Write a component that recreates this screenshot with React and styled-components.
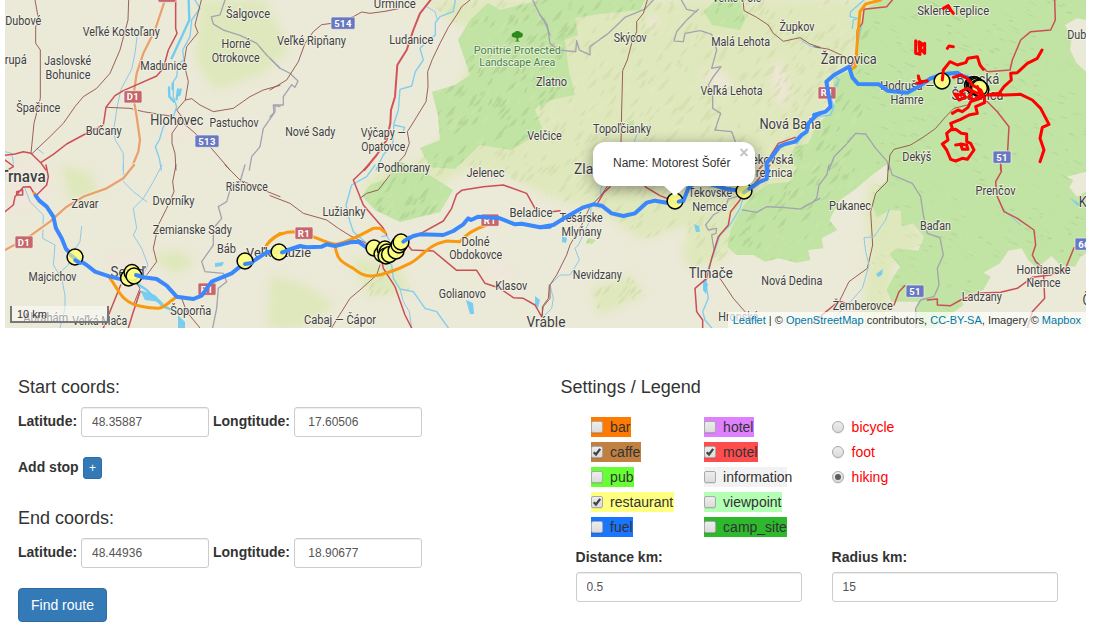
import React from 'react';
import styled, { createGlobalStyle, css } from 'styled-components';

const Global = createGlobalStyle`
  *, *::before, *::after { box-sizing: border-box; }
  body {
    margin: 0;
    background: #fff;
    color: #333;
    font: 14px/20px "Liberation Sans", Arial, sans-serif;
  }
`;

/* ---------- map data ---------- */

const MAP = { x: 5, y: 0, w: 1081, h: 328 };

// Vector tiles: each keeps its lines in thirds of a pixel from its own origin.
const ORIGIN = {
  A: [0, 0], B: [270, 0], C: [540, 0], D: [814, 0],
  E: [0, 165], F: [270, 165], G: [540, 165], H: [814, 165],
};

const STYLES = {
  river: { stroke: '#7fcdf0', width: 4 },
  stream: { stroke: '#8fc8ea', width: 3 },
  big: { stroke: '#6fcdf2', width: 7 },
  border: { stroke: '#a3a3b0', width: 4, dash: '22 3' },
  minor: { stroke: '#8d4a45', width: 2.6 },
  casing: { stroke: '#f3ead9', width: 13 },
  motorway: { stroke: '#e5a36f', width: 7 },
  major: { stroke: '#cb4f55', width: 4.5 },
  trunk: { stroke: '#d2535a', width: 6 },
  orange: { stroke: '#f8990f', width: 9 },
};

const LINES = [
  // north west
  ['A', 'stream', 'M411 112L405 160L395 208L363 268L352 318L341 390L346 420L370 460L370 510M15 455L35 460L41 490M110 445L130 460'],
  ['A', 'big', 'M566 0L568 60L545 110L515 175'],
  ['A', 'river', 'M585 0L600 25L575 60L570 110L548 150L552 180L535 190L530 230L520 245L520 290L530 320L520 350L490 380L478 420L466 440L478 475L484 510'],
  ['A', 'big', 'M507 262L508 290L522 305M518 250L518 268M534 268L530 298M542 268L538 285'],
  ['A', 'border', 'M675 0L660 45L634 50L640 72L670 90L720 106L770 130L800 165L840 205M840 320L820 315L822 340L790 385L780 440L755 470L748 510'],
  ['A', 'minor', 'M105 0L116 60L107 80V130L121 150V295L102 370L93 460M386 0L384 60L360 150L330 220L290 265L250 290L225 320L190 370L150 410L95 462M604 0L585 75L594 98L560 140L552 190L565 245L556 300L575 296L600 315L640 335L700 325L750 290L790 270L840 256M556 300L530 330L545 350L530 380L516 400V430L525 460L528 510M545 365L580 395L630 440L690 510M320 322L390 325L430 335L510 348'],
  ['A', 'casing', 'M495 0L465 90L430 160L410 220L400 290L410 350L420 420L415 455L392 510'],
  ['A', 'motorway', 'M495 0L465 90L430 160L410 220L400 290L410 350L420 420L415 455L392 510'],
  ['A', 'major', 'M527 0V85L531 100L505 150L490 205L470 228L420 250L370 272L345 287L318 322L310 375L250 405L200 432L160 463L122 488L93 460L70 455L45 462L15 466M122 488L138 510M15 480L40 498'],
  // Ludanice valley
  ['B', 'river', 'M556 0L550 35L510 50L496 68V105L470 125L450 145L460 180L436 215L425 258L390 268L385 330L372 370L368 430L340 465L318 510M372 375L404 382L400 393'],
  ['B', 'stream', 'M470 20L495 35L502 60'],
  ['B', 'border', 'M0 175L30 205L60 220L84 243L75 262L65 254L40 290V315L15 315V335L0 350M788 0L810 45L822 60L840 105'],
  ['B', 'minor', 'M600 0L575 20L560 45L535 82L510 130L487 178L473 215L474 260L468 305L425 375L412 395L418 430L405 465L385 487M0 270L50 240L85 185L105 130L130 95L155 74L185 70L250 50L275 36L300 40L345 34L385 26'],
  ['B', 'trunk', 'M482 0L450 40L430 90L410 150L382 195L375 290L363 330L361 370L350 420L320 465L283 510'],
  ['C', 'border', 'M340 0L315 27L255 52L205 100L150 140V165L118 150L110 122L107 155L55 150L30 130L22 75L0 45M424 0L440 28L470 35M475 28L440 60L410 95L402 123L430 125L435 100L480 92L515 103L530 150L515 205L543 200L520 230L505 255L518 285V325L542 340L525 390L575 395L587 428'],
  ['C', 'minor', 'M322 0L310 40L290 65V95L275 130L262 180L248 212L245 330L243 430M609 0L612 32L650 52L685 75L700 100L730 124L780 113L810 132L840 142'],
  ['C', 'stream', 'M330 375L290 405L282 428M785 122L810 138L840 145'],
  ['C', 'major', 'M765 412L715 430L690 470L655 510'],
  ['C', 'big', 'M790 400L770 430'],
  // eastern hills
  ['D', 'border', 'M45 510L60 470L100 430L125 400L155 402L185 445L220 485L226 510'],
  ['D', 'minor', 'M223 510L228 465L240 448L290 435L330 410L365 385L395 350L420 325L460 315M0 140L45 148L105 176'],
  ['D', 'river', 'M150 0L110 35L108 50L130 55L118 60L115 85M135 60L140 85L130 140L128 180M60 225L75 240L50 290L60 320L50 345L10 350'],
  ['D', 'major', 'M235 0L218 20L150 28L145 70L130 90L128 180L108 200M722 0L724 60L710 90L650 95L620 120L595 180L588 210L520 215L510 205M515 300L550 335L585 380L580 470L560 490V510'],
  ['D', 'orange', 'M200 0L155 12L138 35L132 100L124 200L110 208'],
  // Trnava and the south west
  ['E', 'stream', 'M370 0V50L400 80L440 110M486 0L460 50L430 100L400 130L410 190L400 210L425 250L444 300L430 330M75 70L90 110L130 150L128 220L165 240L160 300L185 340L195 390V430L180 489M245 185L240 230L220 260L205 300L165 335'],
  ['E', 'big', 'M410 355L440 375L460 395L490 425L530 440'],
  ['E', 'border', 'M735 0L720 50L690 75L680 110L655 125L665 160L640 190V240L605 290L615 320L670 325L680 350L655 370L650 430L638 489'],
  ['E', 'minor', 'M528 0L518 50L522 80L500 130L475 180L460 250L470 290L440 330M675 0L720 45L790 75L840 95M410 355L420 370L400 420M545 400L560 440L600 489'],
  ['E', 'casing', 'M402 0L370 40L320 70L250 95L200 125L150 170L80 220L15 255'],
  ['E', 'motorway', 'M402 0L370 40L320 70L250 95L200 125L150 170L80 220L15 255'],
  ['E', 'major', 'M15 140L40 120L45 95L70 66L90 65L105 90M138 0L145 35L140 60L110 90M50 80L68 75V90H50ZM15 20L40 5M362 360L310 489M420 380L400 440L385 489'],
  ['E', 'orange', 'M103 85L120 110M330 340C350 365 355 385 375 402C400 425 450 430 475 430C495 428 510 408 530 395M795 250C800 232 820 220 840 205'],
  // Nitra
  ['F', 'river', 'M315 0L290 35L245 60L228 120L240 170L250 200L285 230M335 215L350 212L358 225M350 280L365 300L370 340L390 372L430 380L465 430L500 440L535 489'],
  ['F', 'stream', 'M390 372L400 410L418 440L425 489'],
  ['F', 'minor', 'M0 92L60 115L100 145L170 165L205 190L240 212L300 240M360 30L325 75L290 85L270 100M330 300L320 330L270 375L240 400L215 440L205 455L185 489M838 360L835 400L817 425V455'],
  ['F', 'major', 'M297 0L250 45L280 120L310 155L340 190L350 210M410 235L425 255L490 258L560 316H620L645 355L690 370L730 398L760 400L795 420L815 455M435 215L520 168L545 130L560 88L575 76L640 65L700 60L770 85L795 130M335 285L340 310L375 365L405 450L425 489'],
  ['F', 'orange', 'M0 228C15 212 35 200 75 200C115 203 150 228 195 238C230 235 280 205 310 190L330 190L345 202M195 240C200 280 210 290 250 310C275 330 290 335 310 333C350 328 400 305 420 295C460 275 470 240 530 228L570 230C590 205 620 190 650 180'],
  // Hron valley
  ['G', 'river', 'M615 80L600 130L570 180L540 210L520 270L505 310'],
  ['G', 'big', 'M497 345L495 375'],
  ['G', 'river', 'M500 370L505 400L488 440L495 465L515 489'],
  ['G', 'stream', 'M185 60L180 95L155 120L148 170L115 240L105 250L118 285L90 330L60 330L30 360L40 400L35 430L15 450'],
  ['G', 'border', 'M590 95L565 102L555 130L520 150L497 180L505 195L530 190L528 205L515 210L522 255M608 135L650 142L680 125L725 127L780 132L840 100'],
  ['G', 'minor', 'M205 60L180 95L150 125L125 180L90 240L80 270L50 330L30 360V400L10 425L5 455M540 340L580 400L615 440'],
  ['G', 'major', 'M210 65L190 85L170 120M315 65L360 92L400 108M645 55L690 0M612 80L600 105L572 140L565 180L535 215L515 280L500 340L465 370L470 440L488 465V489M35 140L60 137'],
  ['H', 'border', 'M45 0L38 30L15 60L8 100L0 108M225 0L235 30L295 55L320 95L328 150L340 205L378 218L388 270L370 310L375 360L360 395L320 405L305 430V489'],
  ['H', 'minor', 'M223 0L220 50L185 85L170 140L176 240L160 310L105 350L78 405'],
  ['H', 'stream', 'M225 135L215 165L180 215L150 218L155 260L165 300L145 370L110 410L50 470M560 120L580 145L620 180M655 270L670 300'],
  ['H', 'major', 'M560 0L562 20L545 50L548 90L570 140L610 160L660 195L665 240L655 270L665 290L688 310L692 400L655 440L640 489M780 248L755 310L710 330L655 337L610 370L560 382L490 385L440 405L410 422L370 420V402L340 405M272 362L255 380L240 420M0 470L75 408L95 415'],
];

const FOREST_EAST =
  'M545 0L490 30L480 100L470 190L440 215L400 235L405 310L385 340L345 385L325 430L285 440L262 480L290 500L270 545L205 552L165 580L135 610L110 650L92 690L82 740L110 765L160 765L195 785L235 775L290 788L330 780L325 750L370 745L365 715L412 690L388 660L420 600L470 565L510 530L550 500L565 490L560 540L530 570L515 610L530 652L572 630L602 632L605 680L640 670L672 712L655 752L590 745L568 762L600 800L580 830L560 870L575 905L655 905L645 940V984H700L750 945L790 915L783 890L850 870L872 830L850 818L900 790L925 752L965 745L985 780L1010 805L1055 768L1080 795L1125 800L1142 770L1158 760V575L1130 590L1108 562L1120 540L1100 530L1158 515V215L1130 190L1110 150L1115 110L1095 75L1130 55L1158 60V0Z';

const LAND = {
  meadow:
    'M425 0H880L850 60L830 90L815 170L770 200L720 262L690 268L682 255L690 225L640 240L600 210L560 200L530 188L500 172L468 168L440 185L400 200L360 190L375 175L420 160L450 130L455 95L470 60L475 30L450 20Z' +
    'M200 0H265L290 50L260 75L215 90L195 60ZM60 165L90 172L100 195L70 200ZM270 275L305 285L335 305L300 328H268ZM350 258L395 262L410 290L370 298ZM150 255L180 250L195 262L175 275ZM590 290L630 275L645 295L600 315ZM870 176L930 240L895 260L885 328H860L870 250L865 210Z',
  forest:
    'M488 3L500 10L540 0H645L640 10L600 14L575 18L578 35L565 40L570 80L548 60L540 72L546 95L535 110L543 130L512 150L480 145L455 169L430 167L420 148L440 140L438 115L432 92L455 85L470 75L458 40L470 20Z' +
    'M370 185L390 178L395 160L420 169L453 190L440 212L400 222L375 210L362 196Z' +
    'M704 12L715 0H740L745 20L740 30L712 25Z' +
    'M540 50L570 75L575 95L550 100L540 110ZM628 122L634 120V126L628 128ZM588 238L596 240L592 244L586 243Z',
  pale:
    'M702 75L712 68L725 72L735 88L722 94L712 86ZM770 66L782 60L790 92L784 108L774 98ZM480 270L497 258L515 275L500 282ZM110 255L150 250L155 290L120 298ZM10 165L42 160L50 195L20 215L5 205ZM155 118L185 112L195 135L165 138ZM370 230L410 235L400 265L375 262ZM645 20L655 14L662 22L648 32Z',
};

const LAKES =
  'M140 290L155 295L165 305L175 312L185 322V328H178V315L160 302L145 300ZM215 263L224 262L222 266L215 267ZM466 300L473 303L474 314L470 314ZM535 296L540 300L538 308L535 305ZM562 236L567 238L566 243L562 242ZM694 224L699 226L700 232L696 232ZM703 280L708 284L706 294L703 290ZM876 274L883 269L882 275L878 277ZM1069 197L1080 204L1078 206Z';

// label: text, centre x, baseline y, width, size, weight
const LABELS = [
  ['Dubové', 23.3, 25, 36], ['Veľké Kostoľany', 121.3, 36, 77], ['Šalgovce', 248, 17.7, 44],
  ['Horné', 236, 48, 29], ['Otrokovce', 235.7, 62, 48], ['Jaslovské', 67.7, 65, 47],
  ['Bohunice', 68, 78.7, 45], ['rupá', 15.8, 64, 22], ['Madunice', 163.8, 69.7, 47],
  ['Špačince', 38.3, 111.7, 44], ['Bučany', 103.7, 134.7, 36], ['Hlohovec', 176.8, 125.3, 53, 14],
  ['Pastuchov', 234, 127.3, 49], ['Urmince', 394.8, 8, 42], ['Veľké Ripňany', 311.5, 45.3, 69],
  ['Ludanice', 411.3, 43.7, 44], ['Nové Sady', 310.2, 136.3, 50], ['Výčapy —', 383.3, 137, 45],
  ['Opatovce', 383.3, 150.7, 44], ['Podhorany', 403.7, 171.7, 52.7], ['Zlatno', 551.5, 85.5, 31],
  ['Velčice', 544.5, 140, 34.5], ['Skýcov', 630.2, 42, 33], ['Veľké Pole', 736.7, 1.8, 49],
  ['Župkov', 797, 31.3, 35], ['Malá Lehota', 740.7, 46, 59], ['Veľká Lehota', 731.5, 94.7, 62],
  ['Nová Baňa', 790.4, 129, 62, 14], ['Topoľčianky', 622, 132.7, 58], ['Zlaté', 589.5, 174, 31, 14],
  ['Tekovská', 769.5, 164, 48], ['Breznica', 770.5, 177.3, 44], ['Sklené Teplice', 953.2, 15.3, 72],
  ['Dub', 1076.8, 39.3, 19], ['Žarnovica', 848.8, 64, 56, 14], ['Hodruša —', 907.2, 90, 54],
  ['Hámre', 907, 103.7, 33], ['Banská', 977.8, 83.7, 43, 14], ['Štiavnica', 977.5, 100, 52, 14],
  ['Dekýš', 916.8, 160.7, 29], ['Trnava', 22.4, 182, 46.5, 16, 500], ['Zavar', 85, 208, 27],
  ['Dvorníky', 173.5, 204.5, 42], ['Rišňovce', 246.8, 190.5, 42], ['Zemianske Sady', 192.3, 233.7, 79],
  ['Báb', 226.5, 252.7, 19], ['Veľké Lužie', 278.5, 256.7, 65], ['Majcichov', 52.5, 281, 48],
  ['Sereď', 128, 276.7, 35, 14], ['Šoporňa', 190.8, 314.7, 41], ['Veľká Mača', 99.8, 325, 55],
  ['Abrahám', 45.8, 321.5, 45], ['Lužianky', 344, 216, 43], ['Jelenec', 485.5, 177, 38],
  ['Beladice', 531, 216.5, 43], ['Dolné', 475.5, 245.7, 28], ['Obdokovce', 475.7, 259.3, 53],
  ['Klasov', 511.2, 290, 32], ['Golianovo', 462.3, 297.7, 47], ['Cabaj — Čápor', 340, 323.7, 72],
  ['Vráble', 546, 326.5, 39, 14], ['Tesárske', 581.3, 222.3, 43], ['Mlyňany', 581.5, 236.3, 40],
  ['Nevidzany', 597.3, 278.7, 49], ['Tlmače', 710.7, 278, 44, 14], ['Tekovské', 710.2, 196.7, 44],
  ['Nemce', 709.7, 210.7, 35], ['Nová Dedina', 791.8, 285, 61], ['Hronské', 738.3, 321, 40],
  ['Pukanec', 850, 210.3, 42], ['Prenčov', 995.5, 195.3, 40], ['Baďan', 935.5, 230, 31],
  ['Žemberovce', 862.8, 310, 60], ['Hontianske', 1043.5, 273.7, 54], ['Nemce', 1043.5, 287.3, 34],
  ['Ladzany', 981.8, 300.5, 40], ['K', 1082.7, 207, 8, 14], ['Č', 1086.5, 305, 8, 14],
];

const SHIELDS = [
  ['D1', 124, 90.7, 18, 'red'], ['D1', 15, 236, 18, 'red'], ['D1', 158, -10, 18, 'red'],
  ['R1', 818, 86.7, 18, 'red'], ['R1', 198, 283, 18, 'red'], ['R1', 295, 227, 18, 'red'],
  ['R1', 481, 214, 18, 'red'], ['513', 195, 135, 24, 'blue'], ['514', 331, 17, 24, 'blue'],
  ['51', 993, 151, 18, 'blue'], ['51', 906, 285, 18, 'blue'], ['66', 1075, 238, 18, 'blue'],
];

const ROUTE = [
  ['E', 'M107 92L118 107L140 125L160 155L168 190L185 220L198 252L224 278L260 300L285 320L330 335L365 343L405 330L430 337L470 342L500 362L530 395L580 402L605 392L635 350L695 325L720 305L750 295L800 262L822 258'],
  ['F', 'M20 262L45 258L90 243L110 247L155 245L170 238L195 243L240 232L265 230L290 248L325 260L370 262L395 232L430 213L450 208L520 210L550 198L565 188L580 178L595 160L603 165L625 155L690 160L735 178L755 176L810 187L840 185'],
  ['G', 'M0 187L40 180L80 155L130 127L160 118L185 122L215 145L250 153L285 145L320 113L345 107L380 113L405 115L430 108L445 70L475 45L520 60L560 72L590 76L615 80L645 60L660 50L680 42L683 15L680 0'],
  ['C', 'M680 510V490L700 465L718 440L730 434L765 425L785 405L800 395L805 370L830 345L840 340'],
  ['D', 'M0 345L35 335L50 320L45 290L37 245L60 225L105 200L115 232L132 252L195 253L220 272L280 278L310 262L350 235L390 222L430 218L445 228L470 235'],
];

const TRAILS =
  'M388 25L403 17L410 30L418 40M305 122V160L318 163L315 125L325 132L318 145L332 160M332 130V160M400 145L405 138L418 140M313 228L318 245L340 243M308 250L322 248L314 236' +
  'M385 240L388 210L408 185L430 195L455 188L462 175L490 170L498 195L508 208M418 232L440 225L460 235L475 255L500 270L510 290M490 280L460 265L440 275L455 292L435 300L422 282L440 285' +
  'M684 150L670 175L640 190L610 218L590 220L592 240L570 260L555 280L520 285M520 285H570L620 283L655 300L680 325L705 373L685 382L678 415L690 450L678 485' +
  'M510 290L512 308L485 320L490 340L465 345L440 358L410 370L415 385L398 400L402 420L385 432L398 450L410 478L425 483L445 475L460 478L480 450L470 430L458 425V402L442 400L425 388L410 390M425 435L440 433L445 448L462 448L458 435L440 432' +
  'M500 295L470 305L462 322L445 335L432 330L415 340M490 260L500 285L480 300L465 290L475 275';

const MARKERS = [
  [75, 257], [128.5, 278], [132, 272.5], [134, 276], [245, 261], [279, 252],
  [374, 248], [382, 254], [385, 249], [387, 252], [386, 256], [389.5, 254.5], [396, 251], [399, 245], [401, 242],
  [675, 201], [744, 191], [942, 81],
  [972.5, 85], [974, 84.3], [975.3, 85], [975, 87], [976.5, 86], [978, 87.5], [981, 89.5], [979.5, 88],
];

const INNER_ROUTE = [
  ['E', 'M212 270L226 282', 0.35], ['E', 'M226 286L240 294', 1], ['E', 'M408 330L430 337', 1],
  ['E', 'M735 297L755 294', 1], ['F', 'M36 262L50 258', 1], ['F', 'M400 230L418 218', 1],
  ['G', 'M416 110L430 106', 1], ['G', 'M612 82L628 71', 0.35], ['G', 'M628 71L642 62', 1],
];

function facets(count, seed, x0, x1) {
  let s = seed;
  const rnd = () => {
    s = (s * 16807) % 2147483647;
    return s / 2147483647;
  };
  let d = '';
  for (let i = 0; i < count; i += 1) {
    const x = x0 + rnd() * (x1 - x0);
    const y = rnd() * 328;
    const l = 4 + rnd() * 8;
    const w = 1 + rnd() * 2.5;
    const lean = x > 860 ? 0.8 : -1;
    d += `M${x.toFixed(1)} ${y.toFixed(1)}l${(l * 0.5).toFixed(1)} ${(lean * l * 0.5 - w).toFixed(1)}l${(l * 0.5).toFixed(1)} ${(lean * l * 0.35).toFixed(1)}l${(-l * 0.35).toFixed(1)} ${(-lean * l * 0.5 + w).toFixed(1)}z`;
  }
  return d;
}

const DARK_FACETS = facets(1500, 77, 360, 1086);
const LIGHT_FACETS = facets(1000, 4242, 360, 1086);

/* ---------- map ---------- */

const MapFrame = styled.section`
  position: relative;
  width: 1081px;
  height: 328px;
  margin: 0 8px 0 5px;
  overflow: hidden;
  background: #ebe9d7;
  font-size: 12px;
`;

const MapCanvas = styled.svg`
  display: block;
  width: 100%;
  height: 100%;
`;

const PlaceName = styled.text`
  font-family: Roboto, "Noto Sans", sans-serif;
  text-anchor: middle;
  fill: ${(p) => p.$color || '#3c4046'};
  stroke: rgba(245, 243, 228, 0.8);
  stroke-width: 2px;
  stroke-linejoin: round;
  paint-order: stroke;
`;

const ShieldText = styled.text`
  font: 700 9.5px Roboto, sans-serif;
  letter-spacing: 0.4px;
  text-anchor: middle;
  fill: #fff;
`;

const Popup = styled.div`
  position: absolute;
  left: 588px;
  top: 142px;
  width: 162px;
  height: 44px;
  padding: 13px 20px;
  border-radius: 12px;
  background: #fff;
  box-shadow: 0 3px 14px rgba(0, 0, 0, 0.4);
  line-height: 17px;
  white-space: nowrap;
`;

const PopupTip = styled.div`
  position: absolute;
  left: 659px;
  top: 186px;
  width: 22px;
  height: 10px;
  background: #fff;
  clip-path: polygon(0 0, 100% 0, 50% 100%);
`;

const PopupClose = styled.button`
  position: absolute;
  top: 4px;
  right: 3px;
  width: 16px;
  height: 14px;
  padding: 0;
  border: 0;
  background: none;
  color: #c3c3c3;
  font: bold 16px/14px "Liberation Sans", sans-serif;
`;

const ScaleBar = styled.div`
  position: absolute;
  left: 5px;
  bottom: 5px;
  width: 99px;
  height: 17px;
  padding: 2px 5px 1px;
  border: 2px solid #777;
  border-top: 0;
  background: rgba(255, 255, 255, 0.5);
  font-size: 11px;
  line-height: 12px;
`;

const Attribution = styled.div`
  position: absolute;
  right: 0;
  bottom: 0;
  height: 16px;
  padding: 0 5px;
  background: rgba(255, 255, 255, 0.7);
  font-size: 11px;
  line-height: 16px;
  white-space: nowrap;
`;

const MapLink = styled.a`
  color: #0078a8;
  text-decoration: none;
`;

const tile = (key) => `translate(${ORIGIN[key][0]} ${ORIGIN[key][1]}) scale(0.33333)`;
const EAST = 'translate(700 0) scale(0.33333)';

function RouteMap() {
  return (
    <MapFrame>
      <MapCanvas viewBox={`${MAP.x} ${MAP.y} ${MAP.w} ${MAP.h}`}>
        <defs>
          <clipPath id="forest">
            <path d={LAND.forest} />
            <path d={FOREST_EAST} transform={EAST} />
          </clipPath>
          <clipPath id="meadow"><path d={LAND.meadow} /></clipPath>
          <filter id="soft"><feGaussianBlur stdDeviation="4" /></filter>
        </defs>
        <path d={LAND.meadow} fill="#dfe8bc" filter="url(#soft)" />
        <path d={LAND.pale} fill="#f1e6dc" opacity="0.8" filter="url(#soft)" />
        <g clipPath="url(#meadow)">
          <path d={DARK_FACETS} fill="#c5d19a" opacity="0.35" />
          <path d={LIGHT_FACETS} fill="#e8e8c8" opacity="0.35" />
        </g>
        <g fill="#c1e3a3">
          <path d={LAND.forest} />
          <path d={FOREST_EAST} transform={EAST} />
        </g>
        <g clipPath="url(#forest)">
          <path d={DARK_FACETS} fill="#a3c487" opacity="0.42" />
          <path d={LIGHT_FACETS} fill="#cbe8b0" opacity="0.45" />
        </g>
        <path d={LAKES} fill="#78cdf0" />
        <g fill="none" strokeLinejoin="round" strokeLinecap="round">
          {LINES.map(([key, kind, d], i) => (
            <path
              key={i}
              transform={tile(key)}
              d={d}
              stroke={STYLES[kind].stroke}
              strokeWidth={STYLES[kind].width}
              strokeDasharray={STYLES[kind].dash}
            />
          ))}
        </g>
        {SHIELDS.map(([label, x, y, w, tone], i) => (
          <g key={i}>
            <rect x={x} y={y} width={w} height="12.3" rx="1.5" fill={tone === 'red' ? '#c4666a' : '#6878c2'} stroke="#f4efe6" strokeWidth="0.7" />
            <ShieldText x={x + w / 2} y={y + 9.5}>{label}</ShieldText>
          </g>
        ))}
        <g fill="#2f8a1c">
          <path d="M512 36.5C511 34 513 32.5 514.5 32.5C515.5 30.5 519.5 30.5 520.5 32.5C522.5 32.5 523.5 34.5 522.5 36.5C521.5 38 519.5 37.5 518.3 38V40.5L520 41.5H514.5L516.5 40.5V38C515 37.5 513 38 512 36.5Z" />
        </g>
        <PlaceName $color="#45854a" x="517.3" y="53.7" fontSize="11.5" textLength="87" lengthAdjust="spacingAndGlyphs">Ponitrie Protected</PlaceName>
        <PlaceName $color="#45854a" x="517.3" y="66" fontSize="11.5" textLength="76" lengthAdjust="spacingAndGlyphs">Landscape Area</PlaceName>
        {LABELS.map(([label, x, y, w, size = 12, weight = 400], i) => (
          <PlaceName key={i} x={x} y={y} fontSize={size} fontWeight={weight} textLength={w} lengthAdjust="spacingAndGlyphs">{label}</PlaceName>
        ))}
        <g fill="none" strokeLinejoin="round" strokeLinecap="round" strokeWidth="12" stroke="#3b88fd">
          {ROUTE.map(([key, d]) => <path key={key} transform={tile(key)} d={d} />)}
        </g>
        <g fill="#ffff80" fillOpacity="0.93" stroke="#000" strokeWidth="1.5">
          {MARKERS.map(([x, y], i) => <circle key={i} cx={x} cy={y} r="7.9" />)}
        </g>
        <g fill="none" strokeLinecap="round" strokeLinejoin="round">
          {INNER_ROUTE.map(([key, d, opacity]) => (
            <path key={d} transform={tile(key)} d={d} stroke="#3b88fd" strokeWidth="12" opacity={opacity} />
          ))}
          <path transform={tile('D')} d={TRAILS} stroke="#f00" strokeWidth="9" />
        </g>
      </MapCanvas>
      <Popup>
        Name: Motorest Šofér
        <PopupClose aria-label="Close">×</PopupClose>
      </Popup>
      <PopupTip />
      <ScaleBar>10 km</ScaleBar>
      <Attribution>
        <MapLink>Leaflet</MapLink> | © <MapLink>OpenStreetMap</MapLink> contributors, <MapLink>CC-BY-SA</MapLink>, Imagery © <MapLink>Mapbox</MapLink>
      </Attribution>
    </MapFrame>
  );
}

/* ---------- forms ---------- */

const Panels = styled.main`
  display: grid;
  grid-template-columns: 542.6px 1fr;
  padding: 49px 0 0 18px;
`;

const Heading = styled.h4`
  margin: 0 0 10px;
  font-size: 18px;
  font-weight: 500;
  line-height: 20px;
`;

const CoordRow = styled.div`
  display: flex;
  align-items: center;
  height: 30px;
`;

const FieldLabel = styled.label`
  font-weight: 700;
  white-space: nowrap;
`;

const InlineLabel = styled(FieldLabel)`
  width: ${(p) => p.$width};
  padding-bottom: 2px;
`;

const TextInput = styled.input`
  width: ${(p) => p.$width || '128px'};
  height: 30px;
  margin-right: 4px;
  padding: 5px 10px;
  border: 1px solid #ccc;
  border-radius: 3px;
  background: #fff;
  box-shadow: inset 0 1px 1px rgba(0, 0, 0, 0.075);
  color: #555;
  font: 12px/18px "Liberation Sans", Arial, sans-serif;
`;

const StopRow = styled.div`
  display: flex;
  align-items: center;
  height: 22px;
  margin: 20px 0 29px;
`;

const Button = styled.button`
  border: 1px solid #2e6da4;
  background: #337ab7;
  color: #fff;
  font-family: inherit;
  ${(p) =>
    p.$small
      ? css`
          width: 19px;
          height: 22px;
          padding: 0;
          border-radius: 3px;
          font-size: 12px;
          line-height: 18px;
        `
      : css`
          width: 89px;
          height: 34px;
          margin-top: 20px;
          padding: 0;
          border-radius: 4px;
          font-size: 14px;
          line-height: 20px;
        `}
`;

const Legend = styled.div`
  display: grid;
  grid-template-columns: 113px 128px 1fr;
  padding: 10px 0 0 30px;
`;

const OptionList = styled.div`
  display: flex;
  flex-direction: column;
  align-items: flex-start;
  gap: 5px;
`;

const Option = styled.label`
  display: flex;
  align-items: center;
  gap: ${(p) => (p.$radio ? '8px' : '7.5px')};
  width: ${(p) => (p.$width ? `${p.$width}px` : 'auto')};
  height: 20px;
  background: ${(p) => p.$bg || 'transparent'};
  color: ${(p) => (p.$radio ? '#f00' : '#333')};
  white-space: nowrap;
`;

const Box = styled.span`
  display: flex;
  flex: none;
  align-items: center;
  justify-content: center;
  width: 12px;
  height: 12px;
  border: 1px solid #a9a9a9;
  border-radius: ${(p) => (p.$round ? '50%' : '2px')};
  background: linear-gradient(#ededed, #dcdcdc);
  box-shadow: 0 1px 0 rgba(0, 0, 0, 0.08);
`;

const Dot = styled.span`
  width: 6px;
  height: 6px;
  border-radius: 50%;
  background: #5c5c5c;
`;

const Ranges = styled.div`
  display: flex;
  gap: 30px;
  padding: 10px 0 0 15px;
`;

const RangeField = styled.div`
  display: flex;
  flex-direction: column;
  gap: 5px;
  width: 226px;
`;

const PLACES = [
  [
    { name: 'bar', bg: '#ff7a00', width: 40 },
    { name: 'caffe', bg: '#bf8040', width: 50, checked: true },
    { name: 'pub', bg: '#66ff33', width: 43 },
    { name: 'restaurant', bg: '#ffff80', width: 83, checked: true },
    { name: 'fuel', bg: '#1a75ff', width: 42 },
  ],
  [
    { name: 'hotel', bg: '#df80ff', width: 50 },
    { name: 'motel', bg: '#ff4d4d', width: 54, checked: true },
    { name: 'information', bg: '#f2f2f2', width: 83 },
    { name: 'viewpoint', bg: '#b3ffb3', width: 78 },
    { name: 'camp_site', bg: '#2eb82e', width: 83 },
  ],
];

const MODES = ['bicycle', 'foot', 'hiking'];

function Tick() {
  return (
    <svg width="10" height="10" viewBox="0 0 10 10">
      <path d="M1.7 5.2L4 7.5L8.2 1.9" fill="none" stroke="#444" strokeWidth="2.3" />
    </svg>
  );
}

function Coordinates({ title, lat, lng }) {
  return (
    <>
      <Heading>{title}</Heading>
      <CoordRow>
        <InlineLabel $width="63px">Latitude:</InlineLabel>
        <TextInput defaultValue={lat} />
        <InlineLabel $width="81px">Longtitude:</InlineLabel>
        <TextInput defaultValue={` ${lng}`} />
      </CoordRow>
    </>
  );
}

export default function App() {
  return (
    <>
      <Global />
      <RouteMap />
      <Panels>
        <section>
          <Coordinates title="Start coords:" lat="48.35887" lng="17.60506" />
          <StopRow>
            <InlineLabel $width="65px">Add stop</InlineLabel>
            <Button $small>+</Button>
          </StopRow>
          <Coordinates title="End coords:" lat="48.44936" lng="18.90677" />
          <Button>Find route</Button>
        </section>
        <section>
          <Heading>Settings / Legend</Heading>
          <Legend>
            {PLACES.map((list, i) => (
              <OptionList key={i}>
                {list.map(({ name, bg, width, checked }) => (
                  <Option key={name} $bg={bg} $width={width}>
                    <Box>{checked && <Tick />}</Box>
                    {name}
                  </Option>
                ))}
              </OptionList>
            ))}
            <OptionList>
              {MODES.map((mode) => (
                <Option key={mode} $radio>
                  <Box $round>{mode === 'hiking' && <Dot />}</Box>
                  {mode}
                </Option>
              ))}
            </OptionList>
          </Legend>
          <Ranges>
            <RangeField>
              <FieldLabel>Distance km:</FieldLabel>
              <TextInput $width="226px" defaultValue="0.5" />
            </RangeField>
            <RangeField>
              <FieldLabel>Radius km:</FieldLabel>
              <TextInput $width="226px" defaultValue="15" />
            </RangeField>
          </Ranges>
        </section>
      </Panels>
    </>
  );
}
